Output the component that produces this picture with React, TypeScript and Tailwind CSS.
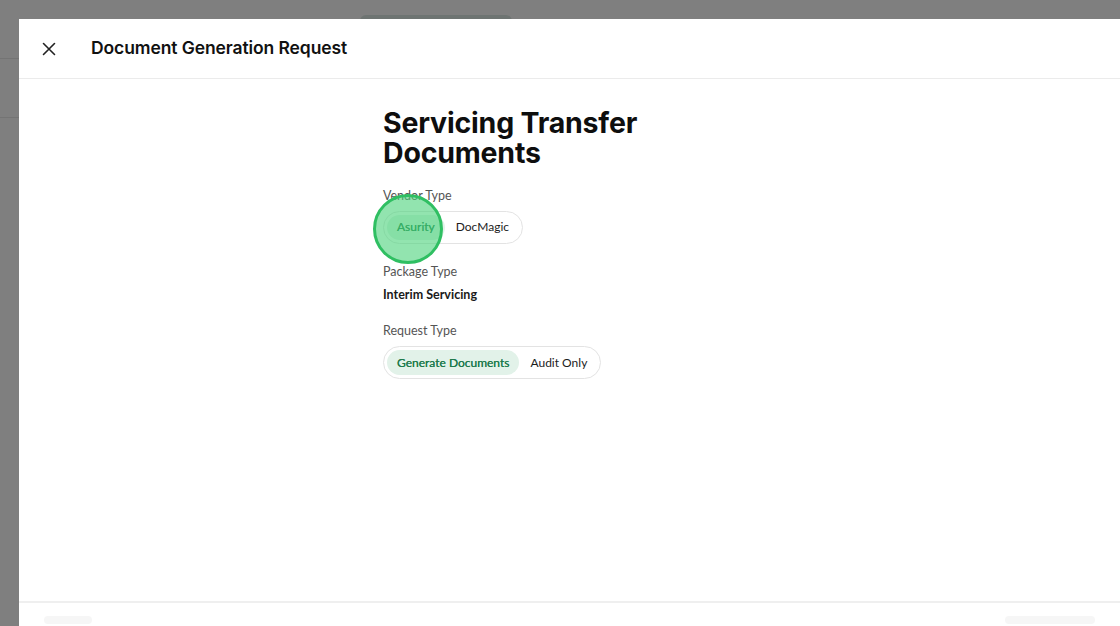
import React from "react";

function Segmented({ options, selected }: { options: string[]; selected: number }) {
  return (
    <div className="inline-flex items-center gap-[1px] rounded-full border border-[#e3e3e3] bg-white p-[3px]">
      {options.map((o, i) => (
        <div
          key={o}
          className={
            i === selected
              ? "rounded-full bg-[#e2f2e9] px-[10px] h-[25px] flex items-center text-[12px] text-[#1f7a4c] [text-shadow:0_0_0.3px_#1f7a4c]"
              : "rounded-full px-[10px] h-[25px] flex items-center text-[12px] text-[#1c1c1c]"
          }
        >
          {o}
        </div>
      ))}
    </div>
  );
}

export default function App() {
  return (
    <div className="relative h-[626px] w-[1120px] overflow-hidden bg-[#7f7f7f]" style={{ fontFamily: "Lato, 'Noto Sans', sans-serif" }}>
      {/* background page under overlay */}
      <div className="absolute left-0 top-[58px] h-px w-[19px] bg-[#747474]" />
      <div className="absolute left-0 top-[117px] h-px w-[19px] bg-[#747474]" />
      <div className="absolute left-[360px] top-[15px] h-[12px] w-[152px] rounded-full bg-[#6e7472]" />

      {/* modal */}
      <div className="absolute left-[19px] top-[19px] right-0 bottom-0 flex flex-col bg-white">
        <div className="flex h-[60px] shrink-0 items-center border-b border-[#ebebeb] pl-[20px]">
          <svg width="20" height="20" viewBox="0 0 20 20" className="mr-[32px]">
            <path d="M4.5 4.5 L15.5 15.5 M15.5 4.5 L4.5 15.5" stroke="#222" strokeWidth="1.6" strokeLinecap="round" />
          </svg>
          <div className="text-[17.5px] font-semibold tracking-[-0.1px] text-[#111]" style={{ fontFamily: "Inter, sans-serif" }}>
            Document Generation Request
          </div>
        </div>

        <div className="flex-1 pl-[364px] pt-[29px]">
          <h1
            className="text-[28.5px] font-bold leading-[30px] tracking-[-0.2px] text-[#0e0e0e]"
            style={{ fontFamily: "Inter, sans-serif" }}
          >
            <div>Servicing Transfer</div>
            <div>Documents</div>
          </h1>

          <div className="mt-[19px] text-[12.5px] text-[#555]">Vendor Type</div>
          <div className="mt-[5px]">
            <Segmented options={["Asurity", "DocMagic"]} selected={0} />
          </div>

          <div className="mt-[19px] text-[12.5px] text-[#555]">Package Type</div>
          <div className="mt-[4px] text-[12.5px] font-bold text-[#1a1a1a]">Interim Servicing</div>

          <div className="mt-[18px] text-[12.5px] text-[#555]">Request Type</div>
          <div className="mt-[5px]">
            <Segmented options={["Generate Documents", "Audit Only"]} selected={0} />
          </div>
        </div>

        <div className="flex h-[25px] shrink-0 items-end justify-between border-t-2 border-[#efefef] px-[25px] pb-[2px]">
          <div className="h-[8px] w-[48px] rounded bg-[#f6f6f6]" />
          <div className="h-[8px] w-[90px] rounded bg-[#f6f6f6]" />
        </div>
      </div>

      {/* click indicator */}
      <div className="absolute left-[373px] top-[194px] h-[70px] w-[70px] rounded-full border-[3px] border-[#2fbf62] bg-[#4ad27a]/60" />
    </div>
  );
}
